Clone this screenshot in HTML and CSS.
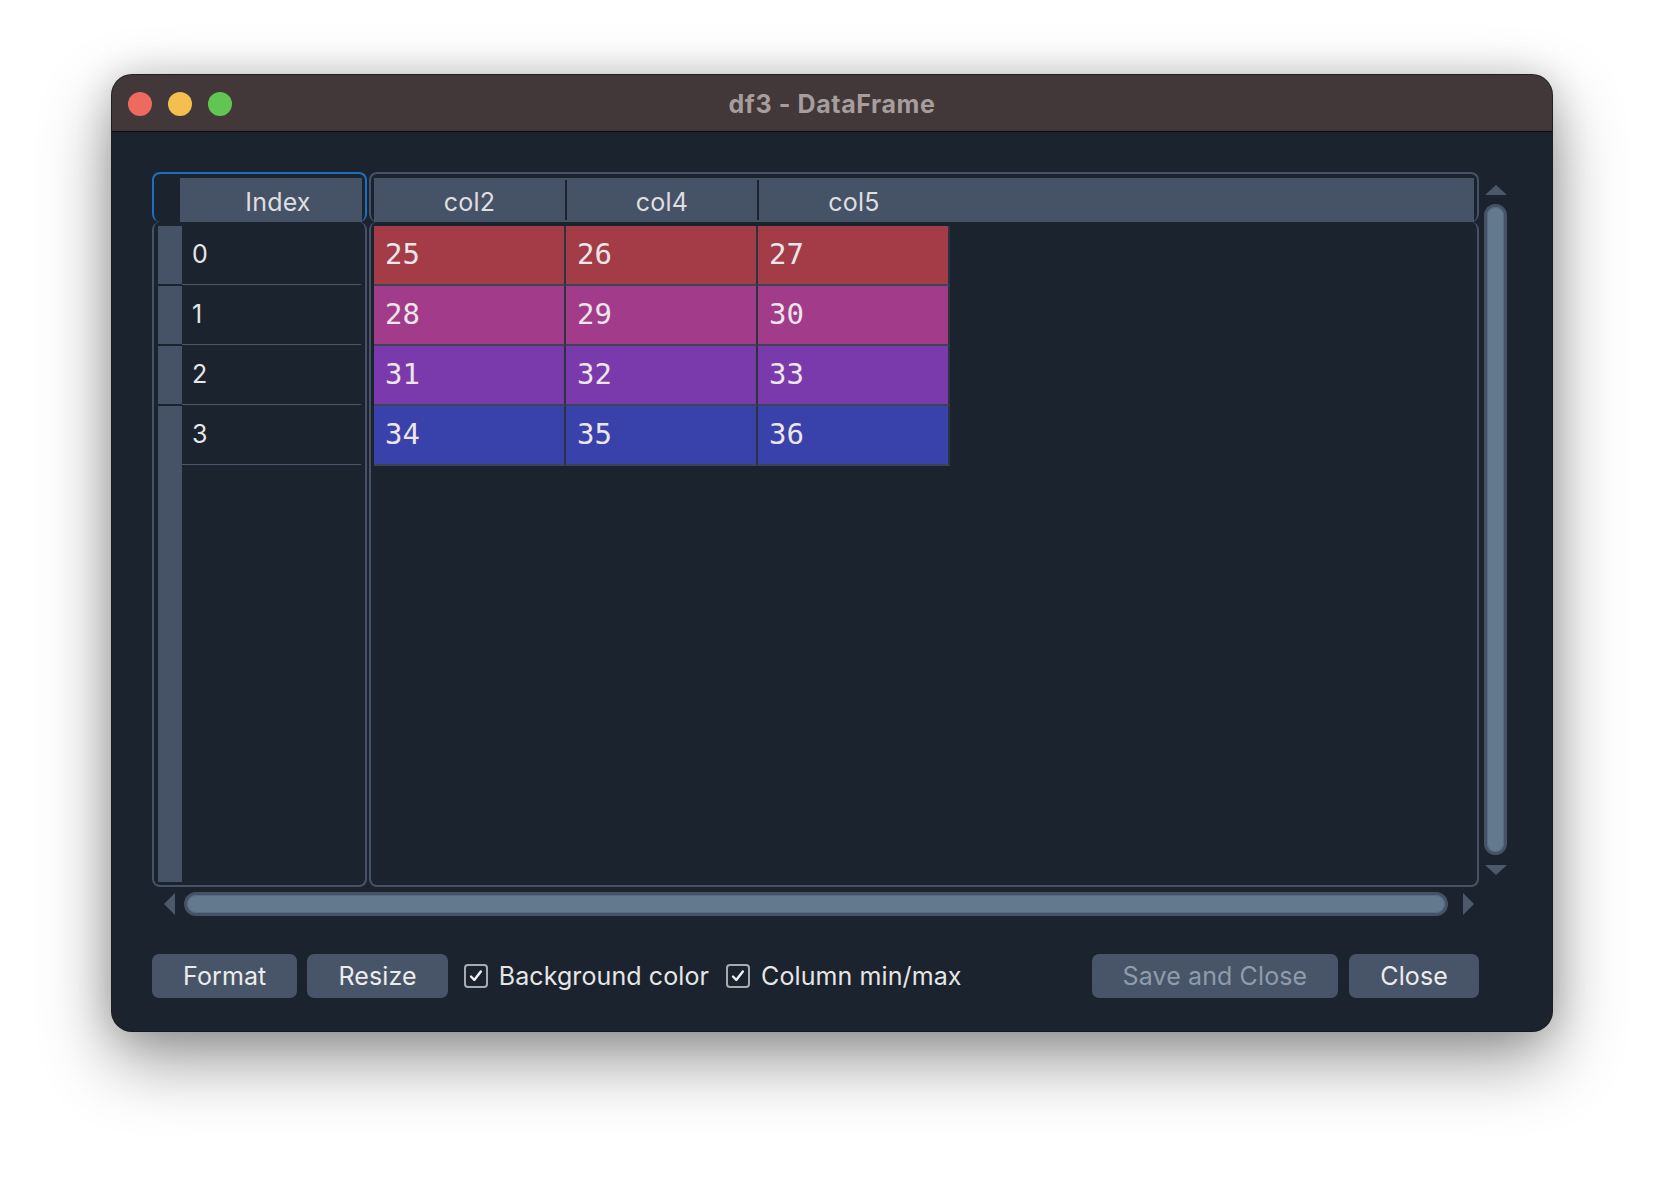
FILE: index.html
```html
<!DOCTYPE html>
<html lang="en">
<head>
<meta charset="utf-8">
<title>df3 - DataFrame</title>
<link rel="stylesheet" href="styles.css">
</head>
<body>
<div class="stage">
  <div class="window">
    <div class="titlebar">
      <div class="lights">
        <span class="light red"></span>
        <span class="light yellow"></span>
        <span class="light green"></span>
      </div>
      <div class="title">df3 - DataFrame</div>
      <div></div>
    </div>
    <div class="content">
      <div class="table-area">
        <div class="hdr-box index-hdr">
          <div class="hdr-fill index-cap">Index</div>
        </div>
        <div class="hdr-box data-hdr">
          <div class="hdr-fill cols">
            <div class="colh">col2</div>
            <div class="colh">col4</div>
            <div class="colh last">col5</div>
          </div>
        </div>
        <div class="vscroll">
          <svg class="arr" width="22" height="10" viewBox="0 0 22 10"><polygon points="0,10 11,0 22,10"/></svg>
          <div class="track vtrack"><div class="thumb"></div></div>
          <svg class="arr" width="22" height="10" viewBox="0 0 22 10"><polygon points="0,0 22,0 11,10"/></svg>
        </div>
        <div class="body-box index-body">
          <div class="gutter">
            <span></span><span></span><span></span><span class="rest"></span>
          </div>
          <div class="index-rows">
            <div class="irow">0</div>
            <div class="irow">1</div>
            <div class="irow">2</div>
            <div class="irow">3</div>
          </div>
        </div>
        <div class="body-box data-body">
          <div class="drow r0"><div class="cell">25</div><div class="cell">26</div><div class="cell">27</div></div>
          <div class="drow r1"><div class="cell">28</div><div class="cell">29</div><div class="cell">30</div></div>
          <div class="drow r2"><div class="cell">31</div><div class="cell">32</div><div class="cell">33</div></div>
          <div class="drow r3"><div class="cell">34</div><div class="cell">35</div><div class="cell">36</div></div>
        </div>
        <div class="hscroll">
          <svg class="arr" width="11" height="22" viewBox="0 0 11 22"><polygon points="11,0 11,22 0,11"/></svg>
          <div class="track htrack"><div class="thumb"></div></div>
          <svg class="arr" width="11" height="22" viewBox="0 0 11 22"><polygon points="0,0 11,11 0,22"/></svg>
        </div>
      </div>
      <div class="buttons">
        <button class="btn">Format</button>
        <button class="btn">Resize</button>
        <label class="check first">
          <span class="box"><svg width="20" height="20" viewBox="0 0 20 20"><path d="M5 10.5l3.3 3.5 6.5-8.5"/></svg></span>
          Background color
        </label>
        <label class="check">
          <span class="box"><svg width="20" height="20" viewBox="0 0 20 20"><path d="M5 10.5l3.3 3.5 6.5-8.5"/></svg></span>
          Column min/max
        </label>
        <div class="spacer"></div>
        <button class="btn disabled">Save and Close</button>
        <button class="btn close">Close</button>
      </div>
    </div>
  </div>
</div>
</body>
</html>
```
FILE: styles.css
```css
* { box-sizing: border-box; }

body {
  margin: 0;
  background: #ffffff;
  font-family: Inter, "Noto Sans", "DejaVu Sans", sans-serif;
}

.stage {
  height: 1180px;
  padding: 75px 0 0 112px;
  overflow: hidden;
}

.window {
  width: 1440px;
  height: 956px;
  border-radius: 20px;
  overflow: hidden;
  background: #1b232e;
  box-shadow: 0 0 0 1px rgba(0, 0, 0, 0.85),
              0 28px 70px rgba(0, 0, 0, 0.42),
              0 0 36px rgba(0, 0, 0, 0.16);
}

/* Title bar */
.titlebar {
  height: 57px;
  background: #423839;
  border-bottom: 1px solid #0e0c0c;
  display: grid;
  grid-template-columns: 1fr auto 1fr;
  align-items: center;
}

.lights {
  display: flex;
  gap: 16px;
  padding-left: 16px;
  padding-top: 2px;
}

.light {
  width: 24px;
  height: 24px;
  border-radius: 50%;
}
.red { background: #ee6a5e; }
.yellow { background: #f5bf4f; }
.green { background: #61c554; }

.title {
  font-weight: 700;
  font-size: 25px;
  letter-spacing: 0.6px;
  color: #a69d9c;
  padding-top: 1px;
}

/* Content */
.content {
  padding: 40px 45px 33px 40px;
}

.table-area {
  display: grid;
  grid-template-columns: 215px 1110px 26px;
  grid-template-rows: 50px 665px 29px;
  column-gap: 2px;
}

.hdr-box {
  border: 2px solid #465367;
  border-bottom: 0;
  border-radius: 8px;
  padding: 4px 3px 0 3px;
  display: flex;
}

.index-hdr {
  border-color: #1f6fc1;
  padding-left: 26px;
}

.hdr-fill {
  flex: 1;
  background: #465367;
  color: #dedfe1;
  font-size: 25px;
  letter-spacing: 0.2px;
  display: flex;
  align-items: center;
  padding-top: 4px;
}

.index-cap {
  justify-content: center;
  padding-left: 14px;
}

.colh {
  width: 193px;
  height: 100%;
  display: flex;
  align-items: center;
  justify-content: center;
  border-right: 2px solid #1b232e;
  margin-top: -4px;
  padding-top: 4px;
}
.colh:nth-child(2) { width: 192px; }
.colh.last { border-right: 0; width: 190px; }

/* Vertical scrollbar */
.vscroll {
  grid-column: 3;
  grid-row: 1 / 3;
  justify-self: end;
  width: 23px;
  display: flex;
  flex-direction: column;
  align-items: center;
  padding: 13px 0 12px;
}

.arr { fill: #4c596b; flex: none; }

.track {
  background: #465367;
  border-radius: 12px;
  padding: 3px;
}
.thumb {
  width: 100%;
  height: 100%;
  background: #637a8e;
  border-radius: 9px;
  box-shadow: inset 0 0 0 1px #576b7e;
}

.vtrack {
  flex: 1;
  width: 23px;
  margin: 9px 0 10px;
}

/* Body boxes */
.body-box {
  border: 2px solid #465367;
  border-top: 0;
  border-radius: 8px;
}

.index-body {
  grid-column: 1;
  grid-row: 2;
  display: flex;
  padding: 0 4px;
}

.gutter {
  width: 24px;
  display: flex;
  flex-direction: column;
  gap: 2px;
  padding: 4px 0 3px;
}
.gutter span {
  height: 58px;
  background: #465367;
}
.gutter .rest { flex: 1; }

.index-rows {
  flex: 1;
  padding-top: 3px;
}

.irow {
  height: 60px;
  border-bottom: 1px solid #48556a;
  display: flex;
  align-items: center;
  padding-left: 10px;
  padding-bottom: 1px;
  font-size: 25px;
  color: #e6e6e6;
}

.data-body {
  grid-column: 2;
  grid-row: 2;
  padding: 4px 3px;
}

.drow { display: flex; }

.cell {
  width: 192px;
  height: 60px;
  border-right: 2px solid #2a333f;
  border-bottom: 2px solid #3a4656;
  display: flex;
  align-items: center;
  padding-left: 11px;
  padding-bottom: 3px;
  font-family: "DejaVu Sans Mono", "Liberation Mono", monospace;
  font-size: 29px;
  color: #ebe6e8;
}

.r0 .cell { background: #a33c47; }
.r1 .cell { background: #a33b8b; }
.r2 .cell { background: #7b3aab; }
.r3 .cell { background: #3941ab; }

/* Horizontal scrollbar */
.hscroll {
  grid-column: 1 / 3;
  grid-row: 3;
  align-self: end;
  height: 24px;
  display: flex;
  align-items: center;
  padding: 0 5px 0 12px;
}

.htrack {
  flex: 1;
  height: 24px;
  margin: 0 15px 0 9px;
}

/* Buttons */
.buttons {
  display: flex;
  align-items: center;
  height: 44px;
  margin-top: 38px;
  margin-right: 28px;
}

.btn {
  height: 44px;
  padding: 0 31px;
  border: 0;
  border-radius: 7px;
  background: #485569;
  color: #ececec;
  font-family: inherit;
  font-size: 25px;
  letter-spacing: 0.12px;
  display: flex;
  align-items: center;
  margin-right: 10px;
}

.btn.disabled { color: #8e9cab; margin-right: 11px; }
.btn.close { margin-right: 0; }

.check {
  display: flex;
  align-items: center;
  gap: 11px;
  font-size: 25px;
  letter-spacing: 0.1px;
  color: #e6e6e6;
  margin-left: 7px;
  margin-right: 10px;
}
.check.first { margin-left: 6px; }

.box {
  width: 24px;
  height: 24px;
  border: 2px solid #a7acb3;
  border-radius: 4px;
  display: flex;
  align-items: center;
  justify-content: center;
}
.box svg path {
  fill: none;
  stroke: #f2f2f2;
  stroke-width: 2.4;
  stroke-linecap: round;
  stroke-linejoin: round;
}

.spacer { flex: 1; }
```
